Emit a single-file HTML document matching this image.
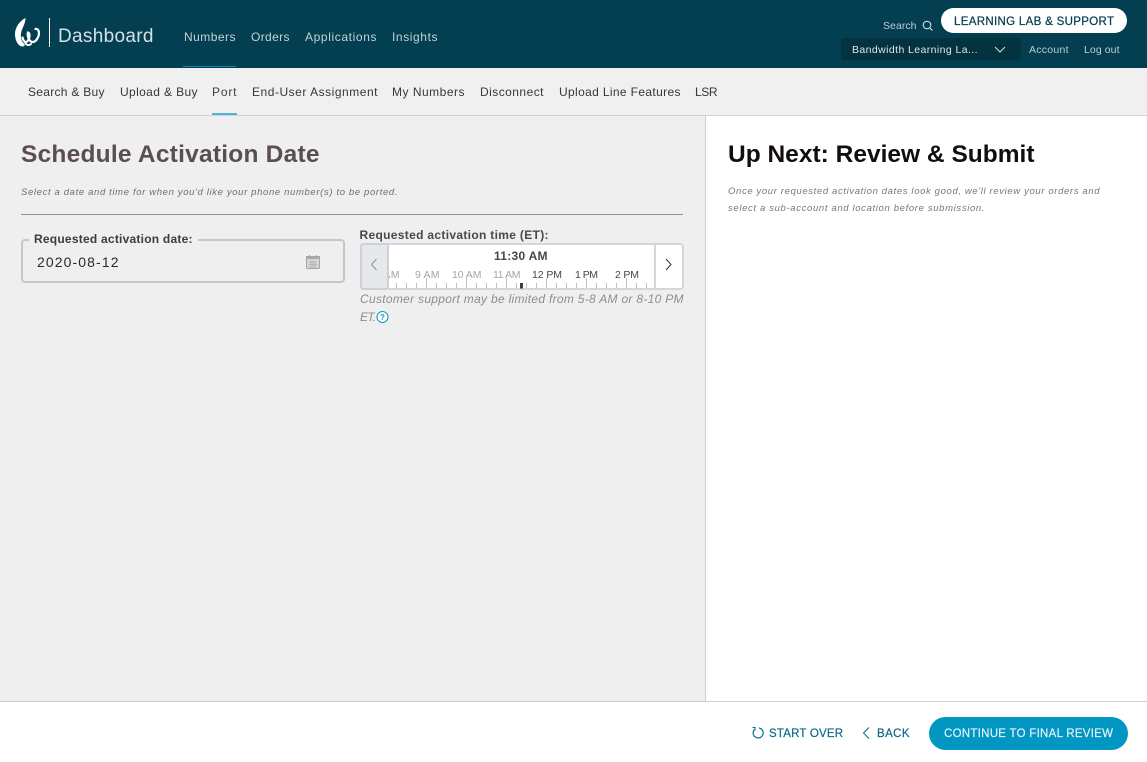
<!DOCTYPE html>
<html><head><meta charset="utf-8"><title>Schedule Activation Date</title>
<style>
html,body{margin:0;padding:0;background:#fff;overflow:hidden}
svg{display:block}
text{font-family:"Liberation Sans",sans-serif;white-space:pre}
</style></head><body>
<svg width="1147" height="762" viewBox="0 0 1147 762" xmlns="http://www.w3.org/2000/svg">
<defs><clipPath id="c"><rect x="389" y="244" width="265" height="45"/></clipPath></defs>
<rect width="1147" height="762" fill="#fff"/>
<!-- header -->
<rect width="1147" height="68" fill="#033f50"/>
<path d="M25.500 18C19.500 21 15 27.500 15 34C15 41 18.500 46.500 22.500 46.500C24.500 46.500 25.500 45 24 43.500C21.500 41.500 20.500 37.500 21 33.500C21.700 28 25.500 24.500 25.500 18Z" fill="#fff"/>
<path d="M22.500 37.500C24 43 27 43.500 29 38.500C30 35.500 29.500 33 28 32.500C27 35 29 42.500 33 42C36.500 41.500 39 36.500 39 33C39 30.500 37.500 28.500 35.500 29" fill="none" stroke="#fff" stroke-width="2.200" stroke-linecap="round"/>
<path d="M25 42C26.500 45.500 28.500 46 31 44" fill="none" stroke="#fff" stroke-width="2" stroke-linecap="round"/>
<rect x="49" y="18" width="1" height="29" fill="#fff"/>
<text x="58" y="42" font-size="19" fill="#d3e0e4" textLength="95.500">Dashboard</text>
<g font-size="12" fill="#c3d3d8">
<text x="184" y="41" textLength="51.500">Numbers</text>
<text x="251" y="41" textLength="38.500">Orders</text>
<text x="305" y="41" textLength="71.500">Applications</text>
<text x="392" y="41" textLength="45.500">Insights</text>
</g>
<rect x="183" y="66" width="53" height="1" fill="#0a8ab0"/>
<text x="883" y="29" font-size="10.500" fill="#bccdd3" textLength="33.500">Search</text>
<circle cx="927" cy="25" r="3.800" fill="none" stroke="#e6eef0" stroke-width="1"/>
<path d="M929.800 28L932.500 30.500" stroke="#e6eef0" stroke-width="1"/>
<rect x="941" y="8" width="186" height="25" rx="12.500" fill="#fff"/>
<text x="954" y="25" font-size="11.500" fill="#043f50" stroke="#043f50" stroke-width=".25" textLength="160">LEARNING LAB &amp; SUPPORT</text>
<rect x="841" y="38" width="180" height="22" rx="3" fill="#03333f"/>
<text x="852" y="53" font-size="10.500" fill="#dce6e9" textLength="125.500">Bandwidth Learning La...</text>
<path d="M995 47L1000 52L1005 47" fill="none" stroke="#d5e0e4" stroke-width="1"/>
<text x="1029" y="53" font-size="10.500" fill="#bccdd3" textLength="39.500">Account</text>
<text x="1084" y="53" font-size="10.500" fill="#bccdd3" textLength="35.500">Log out</text>
<!-- subnav -->
<rect y="68" width="1147" height="47" fill="#f0f0f0"/>
<rect y="115" width="1147" height="1" fill="#d2d2d2"/>
<g font-size="12" fill="#3a3537">
<text x="28" y="96" textLength="76.500">Search &amp; Buy</text>
<text x="120" y="96" textLength="77.500">Upload &amp; Buy</text>
<text x="212" y="96" textLength="24.500" fill="#45403f">Port</text>
<text x="252" y="96" textLength="125.500">End-User Assignment</text>
<text x="392" y="96" textLength="72.500">My Numbers</text>
<text x="480" y="96" textLength="63.500">Disconnect</text>
<text x="559" y="96" textLength="121.500">Upload Line Features</text>
<text x="695" y="96" textLength="22.500">LSR</text>
</g>
<rect x="212" y="113" width="25" height="2" fill="#4fb4d8"/>
<!-- panels -->
<rect y="116" width="705" height="585" fill="#efefef"/>
<rect x="705" y="116" width="1" height="585" fill="#cfcfcf"/>
<rect y="701" width="1147" height="1" fill="#cfcfcf"/>
<text x="21" y="162" font-size="24.500" font-weight="700" fill="#5a4e52" textLength="298.500">Schedule Activation Date</text>
<text x="21" y="195" font-size="9.500" font-style="italic" fill="#6f6f6f" textLength="376.500">Select a date and time for when you'd like your phone number(s) to be ported.</text>
<rect x="21" y="214" width="662" height="1" fill="#9a9092"/>
<text x="728" y="162" font-size="24.500" font-weight="700" fill="#120d10" textLength="306.500">Up Next: Review &amp; Submit</text>
<text x="728" y="194" font-size="9.500" font-style="italic" fill="#777" textLength="371.500">Once your requested activation dates look good, we'll review your orders and</text>
<text x="728" y="211" font-size="9.500" font-style="italic" fill="#777" textLength="256.500">select a sub-account and location before submission.</text>
<!-- date field -->
<rect x="22" y="240" width="322" height="42" rx="3" fill="none" stroke="#c6c6c6" stroke-width="2"/>
<rect x="29" y="236" width="169" height="6" fill="#efefef"/>
<text x="34" y="243" font-size="12" font-weight="700" fill="#3f3a3c" textLength="158.500">Requested activation date:</text>
<text x="37" y="267" font-size="14" fill="#2b2b2b" textLength="81.500">2020-08-12</text>
<rect x="306.500" y="256.500" width="13" height="12" rx="1" fill="#d8d8d8" stroke="#a6a6a6"/>
<rect x="306" y="256" width="14" height="3" fill="#a8a8a8"/>
<path d="M309.500 255v2M316.500 255v2" stroke="#a6a6a6"/>
<path d="M308.500 262h9M308.500 264.500h9M308.500 267h9M311 260.500v7M313 260.500v7M315 260.500v7" stroke="#a5a5a5" stroke-width=".6"/>
<!-- time field -->
<text x="359.500" y="239" font-size="12" font-weight="700" fill="#4d4649" textLength="189">Requested activation time (ET):</text>
<rect x="361" y="244" width="322" height="45" rx="3" fill="#fff" stroke="#d3d6da" stroke-width="2"/>
<rect x="360" y="243" width="29" height="47" rx="3" fill="#e6e8ec"/>
<rect x="361" y="244" width="27" height="45" rx="2" fill="none" stroke="#ccd1d8" stroke-width="2"/>
<rect x="654" y="244" width="2" height="45" fill="#d3d6da"/>
<path d="M376.500 259L371.500 264.500L376.500 270" fill="none" stroke="#8d8f95" stroke-width="1"/>
<path d="M666 259L671 264.500L666 270" fill="none" stroke="#333" stroke-width="1"/>
<text x="494" y="260" font-size="12" font-weight="700" fill="#4a4448" textLength="53.500">11:30 AM</text>
<g font-size="10.500" fill="#a5a5a5" clip-path="url(#c)">
<text x="374.500" y="278" textLength="25">8 AM</text>
<text x="415" y="278" textLength="24.500">9 AM</text>
<text x="452" y="278" textLength="29.500">10 AM</text>
<text x="493" y="278" textLength="27.500">11 AM</text>
</g>
<g font-size="10.500" fill="#444">
<text x="532" y="278" textLength="30">12 PM</text>
<text x="575" y="278" textLength="23">1 PM</text>
<text x="615" y="278" textLength="24">2 PM</text>
</g>
<g stroke="#bcc2ca" stroke-width="1">
<path d="M396.500 283v5M406.500 283v5M416.500 283v5M436.500 283v5M446.500 283v5M456.500 283v5M476.500 283v5M486.500 283v5M496.500 283v5M516.500 283v5M526.500 283v5M536.500 283v5M556.500 283v5M566.500 283v5M576.500 283v5M596.500 283v5M606.500 283v5M616.500 283v5M636.500 283v5M646.500 283v5"/>
<path d="M426.500 278v10M466.500 278v10M506.500 278v10M546.500 278v10M586.500 278v10M626.500 278v10"/>
</g>
<rect x="520" y="283" width="3" height="5.500" fill="#3f3a3e"/>
<text x="360" y="303" font-size="12" font-style="italic" fill="#8d8d8d" textLength="323.500">Customer support may be limited from 5-8 AM or 8-10 PM</text>
<text x="360" y="321" font-size="12" font-style="italic" fill="#8d8d8d" textLength="16">ET.</text>
<circle cx="382.500" cy="317" r="5.500" fill="#fff" stroke="#1296c1" stroke-width="1"/>
<text x="382.500" y="320" font-size="8" font-weight="700" fill="#1296c1" text-anchor="middle">?</text>
<!-- footer -->
<path d="M754.500 729.500A5 5 0 1 0 759 728" fill="none" stroke="#0b6a86" stroke-width="1.200"/>
<path d="M752.500 727.500L755 727.500L755 730.500" fill="none" stroke="#0b6a86" stroke-width="1"/>
<text x="769" y="737" font-size="11.500" fill="#0b6a86" stroke="#0b6a86" stroke-width=".2" textLength="74">START OVER</text>
<path d="M869 727.500L863.500 733L869 738.500" fill="none" stroke="#0b6a86" stroke-width="1"/>
<text x="877" y="737" font-size="11.500" fill="#0b6a86" stroke="#0b6a86" stroke-width=".2" textLength="32.500">BACK</text>
<rect x="929" y="717" width="199" height="33" rx="16.500" fill="#0296c3"/>
<text x="944" y="737" font-size="11.500" fill="#e8f6fb" stroke="#e8f6fb" stroke-width=".15" textLength="169">CONTINUE TO FINAL REVIEW</text>
</svg>
</body></html>
